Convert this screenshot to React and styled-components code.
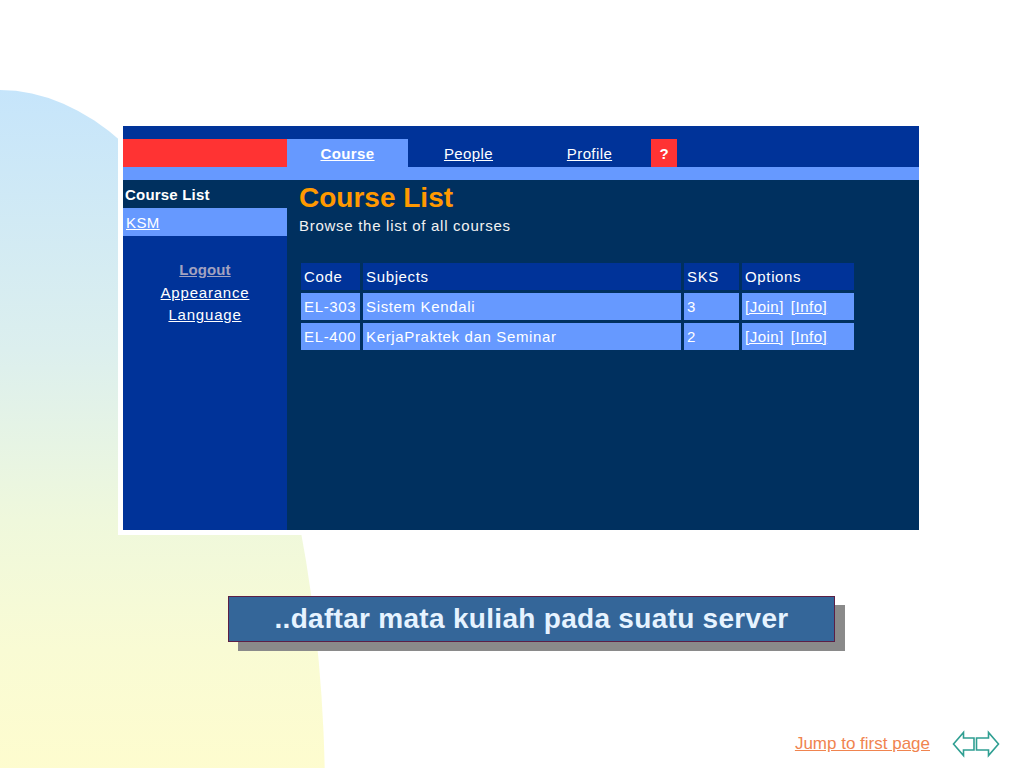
import React from "react";
import styled, { createGlobalStyle } from "styled-components";

const GlobalStyle = createGlobalStyle`
  html, body {
    margin: 0;
    padding: 0;
    background: #ffffff;
  }
  body {
    width: 1024px;
    height: 768px;
    overflow: hidden;
    font-family: "Liberation Sans", Arial, sans-serif;
  }
`;

const Slide = styled.div`
  position: relative;
  width: 1024px;
  height: 768px;
  display: flex;
  flex-direction: column;
  overflow: hidden;
`;

// decorative gradient shape behind the slide content
const Blob = styled.div`
  position: absolute;
  left: -325px;
  top: 90px;
  width: 650px;
  height: 1420px;
  border-radius: 50%;
  background: linear-gradient(
    to bottom,
    #c6e5fb 0px,
    #dcefee 260px,
    #eff8dc 430px,
    #f9fbd4 560px,
    #fefcce 690px,
    #fefcce 100%
  );
  z-index: 0;
`;

const Frame = styled.div`
  position: relative;
  z-index: 1;
  margin: 121px 0 0 118px;
  width: 796px;
  padding: 5px;
  background: #ffffff;
`;

const Screen = styled.div`
  display: flex;
  flex-direction: column;
  height: 404px;
  font-family: "Liberation Sans", Arial, sans-serif;
  font-size: 15px;
  color: #ffffff;
`;

const TopBar = styled.div`
  display: flex;
  align-items: flex-end;
  height: 41px;
  background: #003399;
`;

const RedBlock = styled.div`
  width: 164px;
  height: 28px;
  background: #ff3333;
`;

const Tab = styled.div`
  width: 121px;
  height: 28px;
  display: flex;
  align-items: center;
  justify-content: center;
  background: ${(p) => (p.active ? "#6699ff" : "transparent")};
`;

const TabLink = styled.a`
  color: #ffffff;
  text-decoration: underline;
  font-weight: ${(p) => (p.active ? "bold" : "normal")};
  letter-spacing: 0.4px;
`;

const HelpBox = styled.div`
  width: 26px;
  height: 28px;
  margin-left: 1px;
  background: #ff3333;
  color: #ffffff;
  font-weight: bold;
  display: flex;
  align-items: center;
  justify-content: center;
`;

const Strip = styled.div`
  height: 13px;
  background: #6699ff;
`;

const Body = styled.div`
  flex: 1;
  display: flex;
`;

const Sidebar = styled.div`
  width: 164px;
  background: #003399;
  display: flex;
  flex-direction: column;
`;

const SideHeader = styled.div`
  height: 28px;
  display: flex;
  align-items: center;
  padding-left: 2px;
  background: #00305f;
  font-weight: bold;
  letter-spacing: 0.2px;
`;

const SideItem = styled.div`
  height: 28px;
  display: flex;
  align-items: center;
  padding-left: 3px;
  background: #6699ff;
`;

const SideLink = styled.a`
  color: #ffffff;
  text-decoration: underline;
  letter-spacing: 0.4px;
`;

const SideMenu = styled.div`
  display: flex;
  flex-direction: column;
  align-items: center;
  padding: 23px 0 0 0;
  line-height: 22.5px;
`;

const MenuLink = styled.a`
  color: ${(p) => (p.muted ? "#a2a2c0" : "#ffffff")};
  font-weight: ${(p) => (p.muted ? "bold" : "normal")};
  letter-spacing: ${(p) => (p.muted ? "0.1px" : "0.8px")};
  text-decoration: underline;
`;

const Main = styled.div`
  flex: 1;
  background: #00305f;
  padding: 2px 0 0 12px;
`;

const Title = styled.h1`
  margin: 0;
  font-size: 28px;
  line-height: 32px;
  font-weight: bold;
  color: #ff9900;
`;

const Subtitle = styled.div`
  margin-top: 0;
  line-height: 24px;
  letter-spacing: 0.72px;
  color: #f2f2f2;
`;

const Table = styled.table`
  margin: 22px 0 0 -1px;
  border-collapse: separate;
  border-spacing: 3px;
`;

const Cell = styled.td`
  height: 27px;
  padding: 0 0 0 3px;
  background: ${(p) => (p.head ? "#003399" : "#6699ff")};
  color: #ffffff;
  font-size: 15px;
  letter-spacing: 0.65px;
  white-space: nowrap;
  vertical-align: middle;
`;

const OptLink = styled.a`
  color: #ffffff;
  text-decoration: underline;
  letter-spacing: 0.5px;
  margin-right: 7px;
`;

const Caption = styled.div`
  position: relative;
  z-index: 1;
  margin: 61px 0 0 228px;
  width: 605px;
  height: 44px;
  border: 1px solid #5c1f45;
  background: #346699;
  box-shadow: 10px 9px 0 #8a8a8a;
  display: flex;
  align-items: center;
  justify-content: center;
  font-family: "Liberation Sans", Arial, sans-serif;
  font-weight: bold;
  font-size: 28px;
  letter-spacing: 0.3px;
  color: #e6f3ff;
`;

const Footer = styled.div`
  position: relative;
  z-index: 1;
  margin-top: auto;
  display: flex;
  align-items: center;
  justify-content: flex-end;
  gap: 22px;
  padding: 0 24px 10px 0;
`;

const JumpLink = styled.a`
  font-family: "Liberation Sans", Arial, sans-serif;
  font-size: 17px;
  color: #f0844f;
  text-decoration: underline;
`;

const courses = [
  { code: "EL-303", name: "Sistem Kendali", sks: "3" },
  { code: "EL-400", name: "KerjaPraktek dan Seminar", sks: "2" },
];

function NavArrows() {
  return (
    <svg width="48" height="28" viewBox="0 0 48 28" fill="none">
      <path
        d="M1.5 14 L11.5 2.5 L11.5 8 L22 8 L22 20 L11.5 20 L11.5 25.5 Z"
        stroke="#2f9f92"
        strokeWidth="1.6"
        strokeLinejoin="miter"
      />
      <path
        d="M46.5 14 L36.5 2.5 L36.5 8 L24.5 8 L24.5 20 L36.5 20 L36.5 25.5 Z"
        stroke="#2f9f92"
        strokeWidth="1.6"
        strokeLinejoin="miter"
      />
    </svg>
  );
}

export default function App() {
  return (
    <Slide>
      <GlobalStyle />
      <Blob />
      <Frame>
        <Screen>
          <TopBar>
            <RedBlock />
            <Tab active>
              <TabLink active>Course</TabLink>
            </Tab>
            <Tab>
              <TabLink>People</TabLink>
            </Tab>
            <Tab>
              <TabLink>Profile</TabLink>
            </Tab>
            <HelpBox>?</HelpBox>
          </TopBar>
          <Strip />
          <Body>
            <Sidebar>
              <SideHeader>Course List</SideHeader>
              <SideItem>
                <SideLink>KSM</SideLink>
              </SideItem>
              <SideMenu>
                <MenuLink muted>Logout</MenuLink>
                <MenuLink>Appearance</MenuLink>
                <MenuLink>Language</MenuLink>
              </SideMenu>
            </Sidebar>
            <Main>
              <Title>Course List</Title>
              <Subtitle>Browse the list of all courses</Subtitle>
              <Table>
                <tbody>
                  <tr>
                    <Cell head style={{ width: 56 }}>Code</Cell>
                    <Cell head style={{ width: 315 }}>Subjects</Cell>
                    <Cell head style={{ width: 52 }}>SKS</Cell>
                    <Cell head style={{ width: 109 }}>Options</Cell>
                  </tr>
                  {courses.map((c) => (
                    <tr key={c.code}>
                      <Cell>{c.code}</Cell>
                      <Cell>{c.name}</Cell>
                      <Cell>{c.sks}</Cell>
                      <Cell>
                        <OptLink>[Join]</OptLink>
                        <OptLink>[Info]</OptLink>
                      </Cell>
                    </tr>
                  ))}
                </tbody>
              </Table>
            </Main>
          </Body>
        </Screen>
      </Frame>
      <Caption>..daftar mata kuliah pada suatu server</Caption>
      <Footer>
        <JumpLink>Jump to first page</JumpLink>
        <NavArrows />
      </Footer>
    </Slide>
  );
}
